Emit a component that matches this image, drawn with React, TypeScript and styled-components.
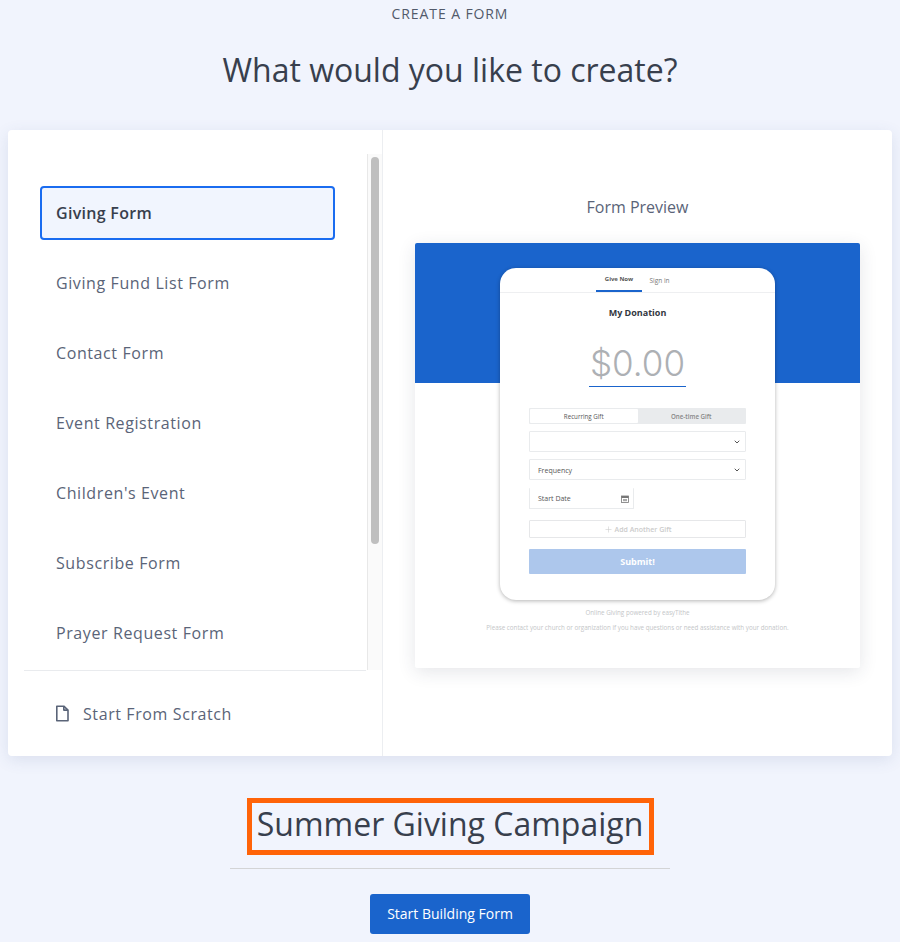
import React from "react";
import styled, { createGlobalStyle } from "styled-components";
import { ChevronDown, Plus } from "lucide-react";

const formTypes = [
  "Giving Form",
  "Giving Fund List Form",
  "Contact Form",
  "Event Registration",
  "Children's Event",
  "Subscribe Form",
  "Prayer Request Form",
];

export default function App() {
  return (
    <>
      <GlobalStyle />
      <Page>
        <Eyebrow>CREATE A FORM</Eyebrow>
        <Heading>What would you like to create?</Heading>

        <Card>
          <Sidebar>
            <ListArea>
              <TypeList>
                {formTypes.map((name, i) => (
                  <TypeItem key={name} $active={i === 0}>
                    {name}
                  </TypeItem>
                ))}
              </TypeList>
              <ScrollTrack>
                <ScrollThumb />
              </ScrollTrack>
            </ListArea>
            <Divider />
            <ScratchRow>
              <FileIcon />
              Start From Scratch
            </ScratchRow>
          </Sidebar>

          <PreviewPane>
            <PreviewTitle>Form Preview</PreviewTitle>
            <PreviewBox>
              <BlueBand />
              <Device>
                <Tabs>
                  <Tab $active>Give Now</Tab>
                  <Tab>Sign in</Tab>
                </Tabs>
                <DonationTitle>My Donation</DonationTitle>
                <Amount>$0.00</Amount>
                <DeviceForm>
                  <Toggle>
                    <ToggleOption $active>Recurring Gift</ToggleOption>
                    <ToggleOption>One-time Gift</ToggleOption>
                  </Toggle>
                  <Select>
                    <span />
                    <ChevronDown size={8} strokeWidth={3} />
                  </Select>
                  <Select>
                    <span>Frequency</span>
                    <ChevronDown size={8} strokeWidth={3} />
                  </Select>
                  <DateField>
                    <span>Start Date</span>
                    <CalendarIcon />
                  </DateField>
                  <AddGift>
                    <Plus size={9} strokeWidth={1.5} />
                    Add Another Gift
                  </AddGift>
                  <Submit>Submit!</Submit>
                </DeviceForm>
              </Device>
              <FinePrint>Online Giving powered by easyTithe</FinePrint>
              <FinePrint>
                Please contact your church or organization if you have questions
                or need assistance with your donation.
              </FinePrint>
            </PreviewBox>
          </PreviewPane>
        </Card>

        <CampaignName>Summer Giving Campaign</CampaignName>
        <Rule />
        <StartButton>Start Building Form</StartButton>
      </Page>
    </>
  );
}

const FileIcon = () => (
  <svg width="13" height="17" viewBox="0 0 13 17" fill="none" stroke="#5a6478" strokeWidth="1.6" strokeLinejoin="round">
    <path d="M0.8 1.2h7l4.2 3.9v10.7H0.8z" />
    <path d="M7.8 1.2v3.9h4.2" />
  </svg>
);

const CalendarIcon = () => (
  <svg width="8" height="8" viewBox="0 0 8 8">
    <rect x="0.5" y="1" width="7" height="6.5" fill="none" stroke="#777" strokeWidth="0.8" />
    <rect x="0.5" y="1" width="7" height="2" fill="#777" />
    <rect x="2" y="4" width="4" height="2.2" fill="#aaa" />
  </svg>
);

const GlobalStyle = createGlobalStyle`
  html, body {
    margin: 0;
    background: #f1f4fd;
  }
  * {
    box-sizing: border-box;
  }
`;

const Page = styled.div`
  display: flex;
  flex-direction: column;
  align-items: center;
  height: 942px;
  overflow: hidden;
  padding: 6px 8px 0;
  font-family: "Open Sans", "Liberation Sans", sans-serif;
  color: #383f4d;
`;

const Eyebrow = styled.div`
  font-size: 14px;
  line-height: 16px;
  letter-spacing: 0.9px;
  color: #525a6b;
`;

const Heading = styled.h1`
  margin: 24px 0 0;
  font-size: 32px;
  line-height: 48px;
  font-weight: 400;
  color: #383f4d;
`;

const Card = styled.div`
  display: flex;
  width: 884px;
  height: 626px;
  margin-top: 36px;
  flex-shrink: 0;
  background: #fff;
  border-radius: 4px;
  box-shadow: 0 4px 16px rgba(60, 80, 130, 0.12);
`;

const Sidebar = styled.div`
  display: flex;
  flex-direction: column;
  width: 375px;
  border-right: 1px solid #eceef1;
`;

const ListArea = styled.div`
  display: flex;
  height: 516px;
  margin-top: 24px;
`;

const TypeList = styled.div`
  flex: 1;
  display: flex;
  flex-direction: column;
  gap: 16px;
  padding: 32px 32px 0 32px;
`;

const TypeItem = styled.div<{ $active?: boolean }>`
  display: flex;
  align-items: center;
  height: 54px;
  flex-shrink: 0;
  padding-left: 14px;
  font-size: 16px;
  letter-spacing: ${({ $active }) => ($active ? "0.3px" : "0.6px")};
  font-weight: ${({ $active }) => ($active ? 600 : 400)};
  color: ${({ $active }) => ($active ? "#383f4d" : "#5a6478")};
  background: ${({ $active }) => ($active ? "#f1f5fe" : "transparent")};
  border: 2px solid ${({ $active }) => ($active ? "#1a6cf0" : "transparent")};
  border-radius: 4px;
`;

const ScrollTrack = styled.div`
  width: 15px;
  flex-shrink: 0;
  padding: 3px 3px 0;
  background: #fafafa;
  border-left: 1px solid #e8e8e8;
`;

const ScrollThumb = styled.div`
  height: 387px;
  background: #bfbfbf;
  border-radius: 4px;
`;

const Divider = styled.div`
  height: 1px;
  margin: 0 16px;
  background: #e9ebee;
`;

const ScratchRow = styled.div`
  display: flex;
  align-items: center;
  gap: 14px;
  flex: 1;
  padding-left: 48px;
  font-size: 16px;
  letter-spacing: 0.6px;
  color: #5a6478;
`;

const PreviewPane = styled.div`
  flex: 1;
  display: flex;
  flex-direction: column;
  align-items: center;
  padding: 66px 32px 0 32px;
`;

const PreviewTitle = styled.div`
  font-size: 16px;
  line-height: 22px;
  color: #5a6478;
`;

const PreviewBox = styled.div`
  position: relative;
  display: flex;
  flex-direction: column;
  align-items: center;
  width: 445px;
  height: 425px;
  margin-top: 25px;
  padding-top: 25px;
  background: #fff;
  border-radius: 2px;
  box-shadow: 0 4px 18px rgba(40, 50, 70, 0.12);
`;

const BlueBand = styled.div`
  position: absolute;
  top: 0;
  left: 0;
  right: 0;
  height: 140px;
  background: #1a64cc;
  border-radius: 2px 2px 0 0;
`;

const Device = styled.div`
  position: relative;
  width: 275px;
  height: 332px;
  margin-bottom: 3px;
  background: #fff;
  border-radius: 16px;
  box-shadow: 0 1px 4px rgba(0, 0, 0, 0.3);
`;

const Tabs = styled.div`
  display: flex;
  gap: 4px;
  height: 25px;
  padding-left: 96px;
  border-bottom: 1px solid #eeeff1;
`;

const Tab = styled.div<{ $active?: boolean }>`
  display: flex;
  align-items: center;
  justify-content: center;
  width: ${({ $active }) => ($active ? "46px" : "27px")};
  height: 24px;
  font-size: ${({ $active }) => ($active ? "6px" : "6.5px")};
  font-weight: ${({ $active }) => ($active ? 700 : 400)};
  color: ${({ $active }) => ($active ? "#555" : "#777")};
  border-bottom: ${({ $active }) => ($active ? "2px solid #1a64cc" : "none")};
`;

const DonationTitle = styled.div`
  margin-top: 13px;
  text-align: center;
  font-size: 9px;
  line-height: 14px;
  font-weight: 700;
  color: #33383f;
`;

const Amount = styled.div`
  width: 97px;
  height: 49px;
  margin: 18px auto 0;
  text-align: center;
  font-family: "Inter", "Open Sans", sans-serif;
  font-size: 35px;
  line-height: 51px;
  font-weight: 300;
  color: #adb0b4;
  border-bottom: 1.5px solid #1a64cc;
`;

const DeviceForm = styled.div`
  display: flex;
  flex-direction: column;
  align-items: flex-start;
  width: 217px;
  margin: 21px auto 0;
`;

const Toggle = styled.div`
  display: flex;
  width: 100%;
  height: 16px;
  padding: 1px;
  background: #e9ebed;
  border-radius: 1px;
`;

const ToggleOption = styled.div<{ $active?: boolean }>`
  flex: 1;
  display: flex;
  align-items: center;
  justify-content: center;
  font-size: 6.2px;
  font-weight: ${({ $active }) => ($active ? 400 : 600)};
  color: ${({ $active }) => ($active ? "#555" : "#888")};
  background: ${({ $active }) => ($active ? "#fff" : "transparent")};
  border-radius: 1px;
`;

const Select = styled.div`
  display: flex;
  align-items: center;
  justify-content: space-between;
  width: 100%;
  height: 21px;
  margin-top: 7px;
  padding: 1px 4px 0 8px;
  font-size: 7px;
  color: #555;
  border: 1px solid #e9ebed;
  border-radius: 1px;
`;

const DateField = styled(Select)`
  width: 105px;
  margin-top: 8px;
  border-top: none;
`;

const AddGift = styled.div`
  display: flex;
  align-items: center;
  justify-content: center;
  gap: 2px;
  width: 100%;
  height: 18px;
  margin-top: 11px;
  font-size: 7px;
  font-weight: 600;
  color: #cccccc;
  border: 1px solid #e6e7e9;
  border-radius: 1px;
`;

const Submit = styled.div`
  display: flex;
  align-items: center;
  justify-content: center;
  width: 100%;
  height: 25px;
  margin-top: 11px;
  font-size: 9px;
  font-weight: 700;
  color: #fff;
  background: #adc7ec;
  border-radius: 1px;
`;

const FinePrint = styled.div`
  margin-top: 5px;
  font-size: 6.25px;
  line-height: 10px;
  color: #c4c6c8;
`;

const CampaignName = styled.div`
  margin-top: 42px;
  width: 407px;
  height: 57px;
  flex-shrink: 0;
  text-align: center;
  white-space: nowrap;
  font-size: 32px;
  line-height: 42px;
  color: #383f4d;
  border: 5px solid #ff6308;
`;

const Rule = styled.div`
  width: 440px;
  height: 1px;
  flex-shrink: 0;
  margin-top: 13px;
  background: #d3d4d6;
`;

const StartButton = styled.button`
  width: 160px;
  height: 40px;
  flex-shrink: 0;
  margin-top: 25px;
  padding: 0 0 2px;
  font-family: inherit;
  font-size: 14px;
  font-weight: 500;
  color: #fff;
  background: #1a64cc;
  border: none;
  border-radius: 3px;
`;
